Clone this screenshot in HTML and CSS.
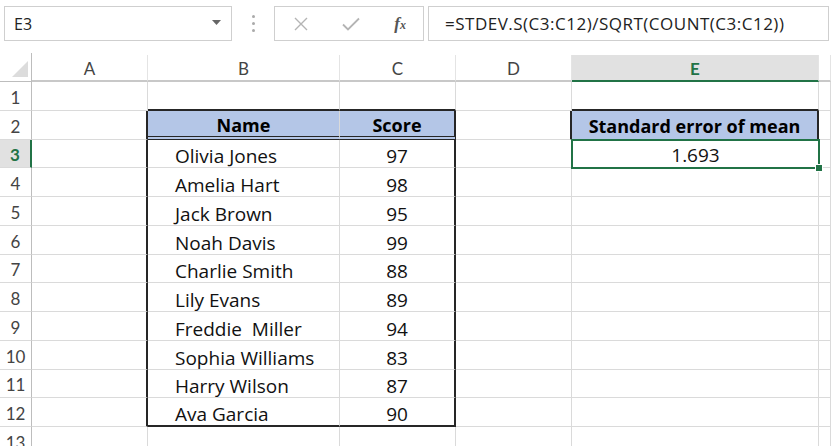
FILE: index.html
```html
<!DOCTYPE html>
<html>
<head>
  <title>Standard error of mean</title>
  <link rel="stylesheet" href="styles.css">
</head>
<body>
  <div class="toolbar">
    <div class="name-box">
      <span>E3</span>
      <svg class="caret" width="9" height="5" viewBox="0 0 9 5"><path d="M0 0h9L4.5 5z" fill="#666"/></svg>
    </div>
    <div class="grip"><i></i><i></i><i></i></div>
    <div class="fx-buttons">
      <svg width="14" height="14" viewBox="0 0 14 14"><path d="M1 1l12 12M13 1L1 13" stroke="#b4b4b4" stroke-width="1.4" fill="none"/></svg>
      <svg width="18" height="14" viewBox="0 0 18 14"><path d="M1 7.5l5 5L17 1.5" stroke="#b4b4b4" stroke-width="1.8" fill="none"/></svg>
      <span class="fx">f<small>x</small></span>
    </div>
    <div class="formula">=STDEV.S(C3:C12)/SQRT(COUNT(C3:C12))</div>
  </div>

  <div class="sheet">
    <!-- column headers -->
    <div class="corner"><span class="tri"></span></div>
    <div class="col-head">A</div>
    <div class="col-head">B</div>
    <div class="col-head">C</div>
    <div class="col-head">D</div>
    <div class="col-head active">E</div>
    <div class="col-head"></div>

    <!-- row 1 -->
    <div class="row-head">1</div>
    <div class="cell"></div>
    <div class="cell tbl-above"></div>
    <div class="cell tbl-above"></div>
    <div class="cell"></div>
    <div class="cell tbl-above"></div>
    <div class="cell"></div>

    <!-- row 2 -->
    <div class="row-head">2</div>
    <div class="cell tbl-before"></div>
    <div class="cell head">Name</div>
    <div class="cell head tbl-end">Score</div>
    <div class="cell tbl-before"></div>
    <div class="cell head single tbl-end">Standard error of mean</div>
    <div class="cell"></div>

    <!-- rows 3 to 12 -->
    <div class="row-head active">3</div>
    <div class="cell tbl-before"></div>
    <div class="cell name">Olivia Jones</div>
    <div class="cell num tbl-end">97</div>
    <div class="cell"></div>
    <div class="cell num selected">1.693<span class="handle"></span></div>
    <div class="cell"></div>

    <div class="row-head">4</div>
    <div class="cell tbl-before"></div>
    <div class="cell name">Amelia Hart</div>
    <div class="cell num tbl-end">98</div>
    <div class="cell"></div>
    <div class="cell"></div>
    <div class="cell"></div>

    <div class="row-head">5</div>
    <div class="cell tbl-before"></div>
    <div class="cell name">Jack Brown</div>
    <div class="cell num tbl-end">95</div>
    <div class="cell"></div>
    <div class="cell"></div>
    <div class="cell"></div>

    <div class="row-head">6</div>
    <div class="cell tbl-before"></div>
    <div class="cell name">Noah Davis</div>
    <div class="cell num tbl-end">99</div>
    <div class="cell"></div>
    <div class="cell"></div>
    <div class="cell"></div>

    <div class="row-head">7</div>
    <div class="cell tbl-before"></div>
    <div class="cell name">Charlie Smith</div>
    <div class="cell num tbl-end">88</div>
    <div class="cell"></div>
    <div class="cell"></div>
    <div class="cell"></div>

    <div class="row-head">8</div>
    <div class="cell tbl-before"></div>
    <div class="cell name">Lily Evans</div>
    <div class="cell num tbl-end">89</div>
    <div class="cell"></div>
    <div class="cell"></div>
    <div class="cell"></div>

    <div class="row-head">9</div>
    <div class="cell tbl-before"></div>
    <div class="cell name">Freddie&nbsp; Miller</div>
    <div class="cell num tbl-end">94</div>
    <div class="cell"></div>
    <div class="cell"></div>
    <div class="cell"></div>

    <div class="row-head">10</div>
    <div class="cell tbl-before"></div>
    <div class="cell name">Sophia Williams</div>
    <div class="cell num tbl-end">83</div>
    <div class="cell"></div>
    <div class="cell"></div>
    <div class="cell"></div>

    <div class="row-head">11</div>
    <div class="cell tbl-before"></div>
    <div class="cell name">Harry Wilson</div>
    <div class="cell num tbl-end">87</div>
    <div class="cell"></div>
    <div class="cell"></div>
    <div class="cell"></div>

    <div class="row-head">12</div>
    <div class="cell tbl-before"></div>
    <div class="cell name tbl-last">Ava Garcia</div>
    <div class="cell num tbl-end tbl-last">90</div>
    <div class="cell"></div>
    <div class="cell"></div>
    <div class="cell"></div>

    <div class="row-head">13</div>
    <div class="cell"></div>
    <div class="cell"></div>
    <div class="cell"></div>
    <div class="cell"></div>
    <div class="cell"></div>
    <div class="cell"></div>
  </div>
</body>
</html>
```

FILE: styles.css
```css
body {
  margin: 0;
  background: #fff;
  font-family: "Open Sans", "Noto Sans", sans-serif;
  overflow: hidden;
}

/* formula bar */
.toolbar {
  display: flex;
  align-items: stretch;
  height: 35px;
  padding: 6px 2px 12px 4px;
}
.name-box {
  width: 228px;
  box-sizing: border-box;
  border: 1px solid #cfcfcf;
  display: flex;
  align-items: center;
  justify-content: space-between;
  padding: 0 10px 0 9px;
  font-size: 16px;
  color: #222;
}
.caret {
  margin-top: -2px;
}
.grip {
  width: 42px;
  display: flex;
  flex-direction: column;
  align-items: center;
  justify-content: center;
  gap: 4px;
}
.grip i {
  width: 3px;
  height: 3px;
  border-radius: 50%;
  background: #aaa;
}
.fx-buttons {
  width: 150px;
  box-sizing: border-box;
  border: 1px solid #cfcfcf;
  display: flex;
  align-items: center;
  padding: 0 17px 0 19px;
  justify-content: space-between;
}
.fx {
  font-family: "Liberation Serif", serif;
  font-style: italic;
  font-weight: bold;
  font-size: 17px;
  color: #555;
}
.fx small {
  font-size: 12px;
}
.formula {
  flex: 1;
  margin-left: 4px;
  border: 1px solid #cfcfcf;
  display: flex;
  align-items: center;
  padding-left: 16px;
  font-size: 17px;
  letter-spacing: 0.5px;
  color: #222;
}

/* sheet grid */
.sheet {
  display: grid;
  grid-template-columns: 32px 116px 192px 116px 116px 247px 1fr;
  grid-template-rows: 29px repeat(13, 28.75px);
}
.sheet > div {
  box-sizing: border-box;
  border-right: 1px solid #dadada;
  border-bottom: 1px solid #dadada;
  display: flex;
  align-items: flex-end;
  padding-bottom: 1px;
  font-size: 19px;
  line-height: 20px;
  color: #111;
  white-space: nowrap;
}
.corner {
  position: relative;
  border-bottom-color: #bdbdbd !important;
  border-right-color: #bdbdbd !important;
}
.tri {
  position: absolute;
  right: 3px;
  bottom: 4px;
  width: 0;
  height: 0;
  border-left: 16px solid transparent;
  border-bottom: 16px solid #dcdcdc;
}
.sheet > .col-head {
  justify-content: center;
  align-items: center;
  border-bottom: 2px solid #c8c8c8;
  border-right-color: #e4e4e4;
  margin-top: 2px;
  color: #444;
  font-family: "Lato", sans-serif;
  font-size: 17px;
  padding: 2px 0 0;
}
.sheet > .col-head.active {
  background: #e1e1e1;
  border-bottom: 2px solid #217346;
  color: #217346;
  font-weight: bold;
}
.sheet > .row-head {
  justify-content: center;
  align-items: center;
  padding: 4px 0 0;
  border-right: 1px solid #bdbdbd;
  color: #444;
  font-family: "Lato", sans-serif;
  font-size: 17px;
}
.sheet > .row-head.active {
  background: #e1e1e1;
  border-right: 2px solid #217346;
  color: #217346;
  font-weight: bold;
}

/* data table */
.sheet > .tbl-above {
  border-bottom: 2px solid #262626;
}
.sheet > .tbl-before {
  border-right: 2px solid #262626;
}
.sheet > .tbl-end {
  border-right: 2px solid #262626;
}
.sheet > .tbl-last {
  border-bottom: 2px solid #262626;
}
.sheet > .head {
  background: #b4c6e7;
  font-weight: bold;
  font-size: 18px;
  justify-content: center;
  color: #000;
  border-bottom: 4px double #262626;
}
.sheet > .head.single {
  border-bottom: 1px solid #262626;
  padding-bottom: 3px;
}
.sheet > .name {
  padding-left: 27px;
}
.sheet > .num {
  justify-content: center;
}
.sheet > .selected {
  position: relative;
  border: none;
  outline: 2px solid #217346;
  outline-offset: -1px;
  padding-bottom: 3px;
}
.handle {
  position: absolute;
  right: -4px;
  bottom: -4px;
  width: 6px;
  height: 6px;
  background: #217346;
  border: 1px solid #fff;
}
```
